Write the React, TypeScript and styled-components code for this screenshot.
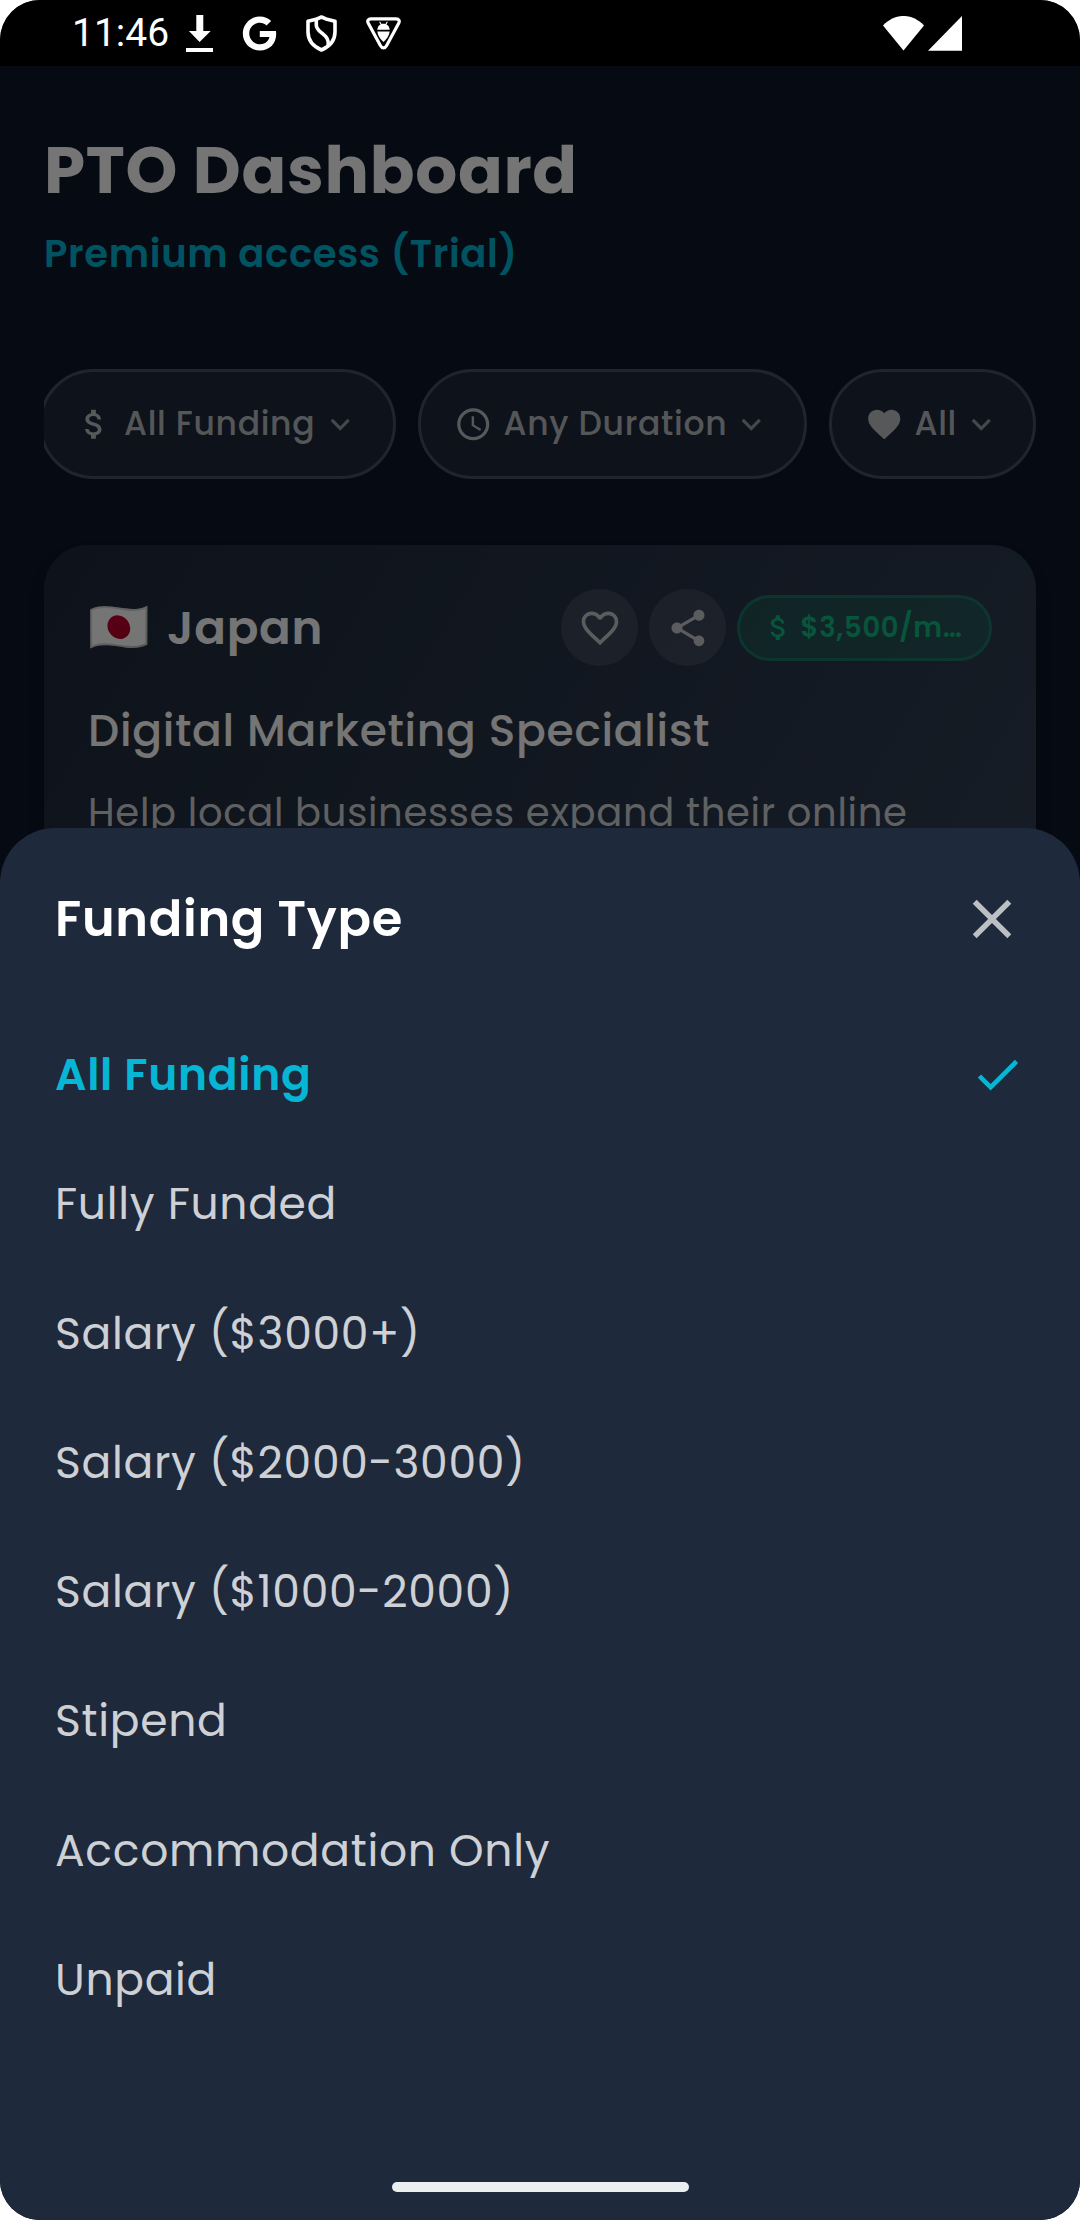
import React from "react";
import styled, { createGlobalStyle } from "styled-components";
import {
  MdAccessTime,
  MdAttachMoney,
  MdCheck,
  MdClose,
  MdExpandMore,
  MdFavorite,
  MdFavoriteBorder,
  MdShare,
} from "react-icons/md";
import { FaGoogle } from "react-icons/fa";

const GlobalStyle = createGlobalStyle`
  * { box-sizing: border-box; }
  body { margin: 0; background: #fff; }
  svg { display: block; flex: none; }
`;

const Screen = styled.div`
  position: relative;
  display: flex;
  flex-direction: column;
  width: 1080px;
  height: 2220px;
  overflow: hidden;
  border-radius: 40px;
  background: #0f172a;
  color: #fff;
  font-family: Poppins, Inter, "Open Sans", sans-serif;
  letter-spacing: 0.6875px;
`;

const StatusBar = styled.header`
  display: flex;
  align-items: center;
  flex: none;
  height: 66px;
  padding: 0 118px 0 72px;
  background: #000;
`;

const Clock = styled.time`
  width: 114px;
  font: 400 39px/66px Roboto, sans-serif;
  letter-spacing: 0;
`;

const Notifications = styled.div`
  display: flex;
  align-items: center;
  gap: 29px;
`;

const Signals = styled.div`
  display: flex;
  align-items: center;
  gap: 4px;
  margin-left: auto;
`;

const Page = styled.main`
  flex: 1;
  min-height: 0;
  padding: 58px 44px 0;
`;

const Title = styled.h1`
  margin: 0;
  font-size: 66px;
  font-weight: 700;
  line-height: 92px;
  white-space: nowrap;
`;

const Plan = styled.p`
  margin: 9px 0 0;
  color: #06b6d4;
  font-size: 38.5px;
  font-weight: 600;
  line-height: 58px;
`;

const Filters = styled.div`
  display: flex;
  justify-content: flex-end;
  gap: 22.5px;
  margin-top: 86px;
  overflow: hidden;
`;

const Chip = styled.button<{ $width: number }>`
  display: flex;
  align-items: center;
  flex: none;
  width: ${(p) => p.$width}px;
  height: 110px;
  padding: 0 33px;
  border: 3px solid #475062;
  border-radius: 55px;
  background: #1e293b;
  color: rgba(255, 255, 255, 0.7);
  font-family: inherit;
  font-size: 33px;
  font-weight: 500;
  letter-spacing: inherit;
  white-space: nowrap;
`;

const ChipLabel = styled.span`
  margin-left: 11px;
`;

const Chevron = styled(MdExpandMore)`
  margin-left: auto;
  color: rgba(255, 255, 255, 0.54);
`;

const Card = styled.article`
  height: 600px;
  margin-top: 66px;
  padding: 44px;
  border-radius: 44px;
  background: linear-gradient(121deg, #1e293b, #334155);
  box-shadow: 0 11px 33px rgba(0, 0, 0, 0.3);
`;

const CardHeader = styled.div`
  display: flex;
  align-items: center;
  gap: 11px;
  height: 77px;
`;

const Flag = styled.span`
  width: 68px;
  font: 49.5px/77px "Noto Color Emoji", sans-serif;
`;

const Country = styled.h2`
  flex: 1;
  margin: 0;
  font-size: 46.75px;
  font-weight: 600;
`;

const RoundButton = styled.button`
  display: grid;
  place-items: center;
  flex: none;
  width: 77px;
  height: 77px;
  padding: 0;
  border: 0;
  border-radius: 50%;
  background: rgba(255, 255, 255, 0.1);
  color: rgba(255, 255, 255, 0.7);
`;

const Salary = styled.span`
  display: flex;
  align-items: center;
  gap: 5.5px;
  flex: none;
  width: 255px;
  height: 66px;
  padding-left: 22px;
  border: 3px solid rgba(16, 185, 129, 0.34);
  border-radius: 33px;
  background: rgba(16, 185, 129, 0.2);
  color: #10b981;
  font-size: 27.5px;
  font-weight: 600;
  white-space: nowrap;
`;

const Role = styled.h3`
  margin: 31.5px 0 0;
  font-size: 44px;
  font-weight: 500;
  line-height: 66px;
  white-space: nowrap;
`;

const Summary = styled.p`
  margin: 19.5px 0 0;
  color: rgba(255, 255, 255, 0.8);
  font-size: 38.5px;
  line-height: 60px;
  white-space: nowrap;
`;

const Scrim = styled.div`
  position: absolute;
  inset: 66px 0 0;
  background: rgba(0, 0, 0, 0.54);
`;

const Sheet = styled.section`
  position: absolute;
  inset: 828px 0 0;
  display: flex;
  flex-direction: column;
  padding: 58px 55px 28px;
  border-radius: 55px 55px 0 0;
  background: #1e293b;
`;

const SheetHeader = styled.div`
  display: flex;
  align-items: center;
  justify-content: space-between;
  height: 66px;
  margin-bottom: 58px;
  color: rgba(255, 255, 255, 0.7);
`;

const SheetTitle = styled.h2`
  margin: 0;
  color: #fff;
  font-size: 49.5px;
  font-weight: 600;
`;

const Options = styled.ul`
  margin: 0;
  padding: 0;
  list-style: none;
`;

const Option = styled.li<{ $selected: boolean }>`
  display: flex;
  align-items: center;
  justify-content: space-between;
  height: 129.25px;
  color: ${(p) => (p.$selected ? "#06b6d4" : "rgba(255, 255, 255, 0.8)")};
  font-size: 44px;
  font-weight: ${(p) => (p.$selected ? 600 : 400)};
`;

const HomeBar = styled.div`
  width: 297px;
  height: 10px;
  margin: auto auto 0;
  border-radius: 5px;
  background: #ebeeee;
`;

const filters = [
  { label: "All Funding", icon: MdAttachMoney, width: 357 },
  { label: "Any Duration", icon: MdAccessTime, width: 388.5 },
  { label: "All", icon: MdFavorite, width: 207 },
];

const options = [
  "All Funding",
  "Fully Funded",
  "Salary ($3000+)",
  "Salary ($2000-3000)",
  "Salary ($1000-2000)",
  "Stipend",
  "Accommodation Only",
  "Unpaid",
];

const DownloadIcon = () => (
  <svg width="27" height="37" viewBox="0 0 27 37" fill="#fff">
    <path d="M10.3 0h7v16h7.4L13.6 27 2.9 16h7.4zM0 33h27v4H0z" />
  </svg>
);

const ShieldIcon = () => (
  <svg width="31" height="37" viewBox="0 0 31 37" fill="none" stroke="#fff" strokeWidth="3.6" strokeLinejoin="round">
    <path d="M15.5 2 10 4.3 2 6.2V17c0 8.5 5.5 14.5 13.5 18C23.5 31.5 29 25.5 29 17V6.2L21 4.3z" />
    <path d="M10.3 4.5V10c0 4 2.7 5.7 5.7 8.2 4.2 3.4 6.8 5.8 6.2 12.3" />
  </svg>
);

const BugIcon = () => (
  <svg width="35" height="33" viewBox="0 0 35 33">
    <path
      d="M5 1.8h25c2.8 0 4 2.2 2.7 4.4L20.5 28.8c-1.5 2.7-4.5 2.7-6 0L2.3 6.2C1 4 2.2 1.8 5 1.8z"
      fill="none"
      stroke="#fff"
      strokeWidth="3.2"
    />
    <path
      d="M11.3 12.8c.2-3 1.5-4.7 3.3-5.4L13.2 5l.9-.4 1.500 2.400c1.200-.3 2.600-.3 3.800 0l1.500-2.400.9.400-1.400 2.400c1.800.7 3.100 2.400 3.300 5.400zM11.3 14.6h12.4c-.4 4.2-3 7.7-6.2 10.400-3.200-2.700-5.800-6.200-6.200-10.400z"
      fill="#fff"
    />
  </svg>
);

const WifiIcon = () => (
  <svg width="41" height="35" viewBox="0 0 41 35" fill="#fff">
    <path d="M0 9.5C12-3.2 29-3.2 41 9.5L20.5 34.5z" />
  </svg>
);

const CellIcon = () => (
  <svg width="34" height="35" viewBox="0 0 34 35" fill="#fff">
    <path d="M34 0v34.7H0z" />
  </svg>
);

export default function App() {
  return (
    <>
      <GlobalStyle />
      <Screen>
        <StatusBar>
          <Clock>11:46</Clock>
          <Notifications>
            <DownloadIcon />
            <FaGoogle size={35} />
            <ShieldIcon />
            <BugIcon />
          </Notifications>
          <Signals>
            <WifiIcon />
            <CellIcon />
          </Signals>
        </StatusBar>

        <Page>
          <Title>PTO Dashboard</Title>
          <Plan>Premium access (Trial)</Plan>
          <Filters>
            {filters.map(({ label, icon: Icon, width }) => (
              <Chip key={label} $width={width}>
                <Icon size={38.5} />
                <ChipLabel>{label}</ChipLabel>
                <Chevron size={38.5} />
              </Chip>
            ))}
          </Filters>
          <Card>
            <CardHeader>
              <Flag>🇯🇵</Flag>
              <Country>Japan</Country>
              <RoundButton>
                <MdFavoriteBorder size={44} />
              </RoundButton>
              <RoundButton>
                <MdShare size={44} />
              </RoundButton>
              <Salary>
                <MdAttachMoney size={33} />
                $3,500/m…
              </Salary>
            </CardHeader>
            <Role>Digital Marketing Specialist</Role>
            <Summary>Help local businesses expand their online</Summary>
          </Card>
        </Page>

        <Scrim />
        <Sheet>
          <SheetHeader>
            <SheetTitle>Funding Type</SheetTitle>
            <MdClose size={66} />
          </SheetHeader>
          <Options>
            {options.map((label, i) => (
              <Option key={label} $selected={i === 0}>
                {label}
                {i === 0 && <MdCheck size={55} />}
              </Option>
            ))}
          </Options>
          <HomeBar />
        </Sheet>
      </Screen>
    </>
  );
}
